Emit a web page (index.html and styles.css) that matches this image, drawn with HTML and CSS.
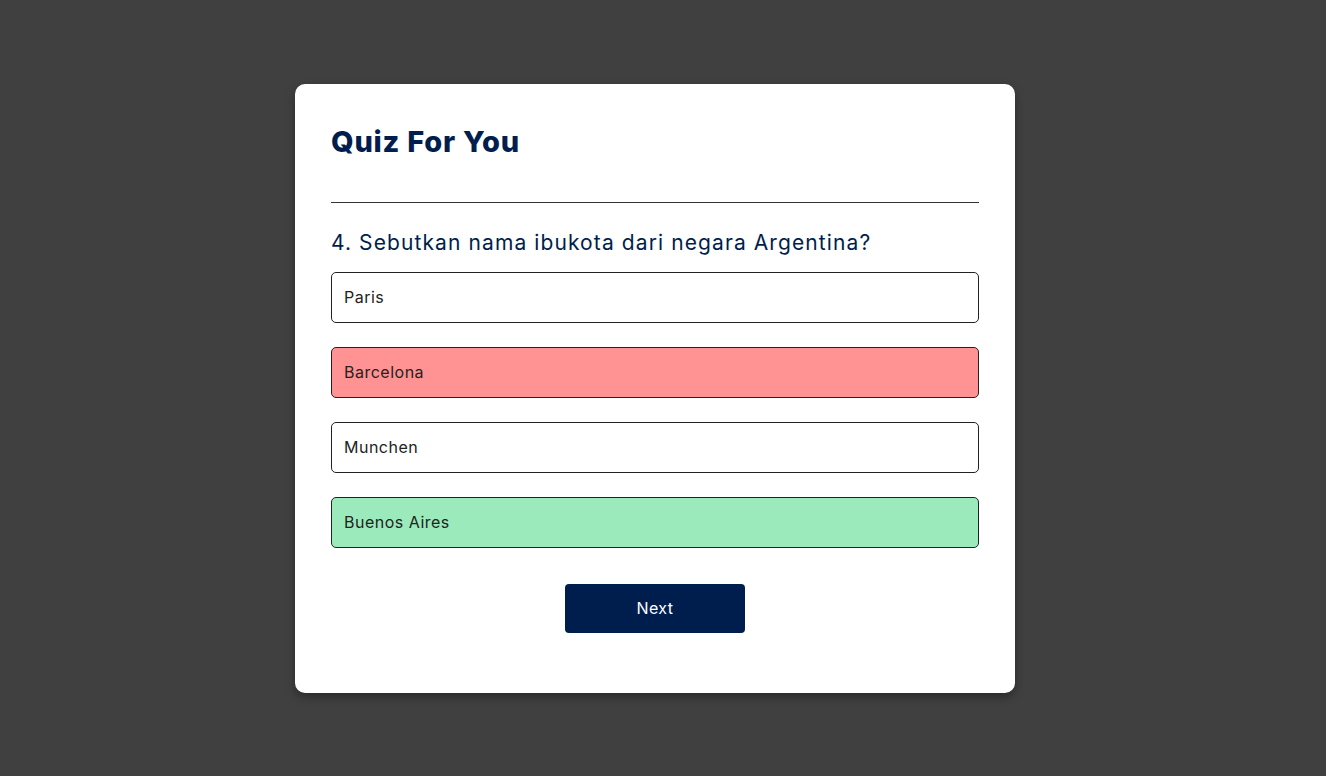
FILE: index.html
```html
<!DOCTYPE html>
<html lang="id">
<head>
<meta charset="utf-8">
<title>Quiz For You</title>
<link rel="stylesheet" href="styles.css">
</head>
<body>
<div class="app">
  <h1 class="title">Quiz For You</h1>
  <div class="quiz">
    <h2 class="question">4. Sebutkan nama ibukota dari negara Argentina?</h2>
    <div class="answers">
      <button class="btn">Paris</button>
      <button class="btn incorrect">Barcelona</button>
      <button class="btn">Munchen</button>
      <button class="btn correct">Buenos Aires</button>
    </div>
    <button class="next-btn">Next</button>
  </div>
</div>
</body>
</html>
```
FILE: styles.css
```css
* { box-sizing: border-box; }
html, body { margin: 0; padding: 0; }
body {
  background: #404040;
  font-family: "Inter", "Open Sans", sans-serif;
  min-height: 776px;
  padding-right: 16px;
}
.app {
  width: 720px;
  margin: 84px auto 0;
  background: #fff;
  border-radius: 10px;
  padding: 36px 36px 60px;
  box-shadow: 0 4px 10px rgba(0,0,0,0.35);
}
.title {
  margin: 0;
  font-size: 29px;
  font-weight: 800;
  color: #001e4d;
  line-height: 44px;
  letter-spacing: 0.75px;
  padding-bottom: 38px;
  border-bottom: 1px solid #333;
}
.quiz {
  display: flex;
  flex-direction: column;
}
.question {
  margin: 24px 0 0;
  font-size: 21px;
  font-weight: 400;
  color: #001e4d;
  line-height: 32px;
  letter-spacing: 1.1px;
}
.answers {
  display: flex;
  flex-direction: column;
  gap: 24px;
  margin-top: 13px;
}
.btn {
  display: block;
  width: 100%;
  height: 51px;
  background: #fff;
  color: #222;
  border: 1px solid #222;
  border-radius: 5px;
  padding: 0 12px 2px;
  text-align: left;
  font-family: inherit;
  font-size: 16px;
  font-weight: 400;
  letter-spacing: 0.5px;
}
.btn.incorrect { background: #ff9393; }
.btn.correct { background: #9aeabc; }
.next-btn {
  align-self: center;
  width: 180px;
  height: 49px;
  margin-top: 36px;
  padding: 0 0 2px;
  background: #001e4d;
  color: #fff;
  border: 0;
  border-radius: 4px;
  font-family: inherit;
  font-size: 16px;
  font-weight: 400;
  letter-spacing: 0.4px;
}
```
